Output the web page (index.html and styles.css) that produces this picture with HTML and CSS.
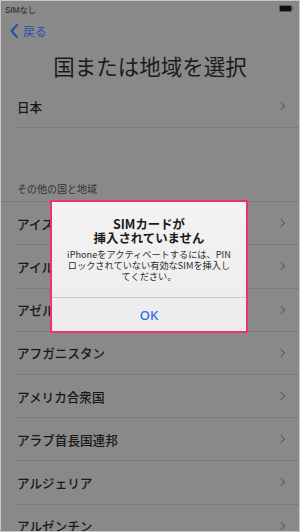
FILE: index.html
```html
<!DOCTYPE html>
<html lang="ja">
<head>
<meta charset="utf-8">
<title>国または地域を選択</title>
<link rel="stylesheet" href="styles.css">
</head>
<body>
<div class="frame">
  <div class="status">
    <span class="carrier">SIMなし</span>
    <span class="battery"><span class="battery-body"></span><span class="battery-nub"></span></span>
  </div>
  <div class="nav">
    <svg class="back-icon" width="8" height="14" viewBox="0 0 8 14"><polyline points="7,1 1.6,7 7,13" fill="none" stroke="#2550a8" stroke-width="2" stroke-linecap="round" stroke-linejoin="round"/></svg>
    <span class="back-text">戻る</span>
  </div>
  <h1 class="title">国または地域を選択</h1>

  <ul class="list">
    <li class="row"><span>日本</span><span class="chev"></span></li>
  </ul>

  <div class="section-header">その他の国と地域</div>
  <ul class="list list-top">
    <li class="row"><span>アイスランド</span><span class="chev"></span></li>
    <li class="row"><span>アイルランド</span><span class="chev"></span></li>
    <li class="row"><span>アゼルバイジャン</span><span class="chev"></span></li>
    <li class="row"><span>アフガニスタン</span><span class="chev"></span></li>
    <li class="row"><span>アメリカ合衆国</span><span class="chev"></span></li>
    <li class="row"><span>アラブ首長国連邦</span><span class="chev"></span></li>
    <li class="row"><span>アルジェリア</span><span class="chev"></span></li>
    <li class="row"><span>アルゼンチン</span><span class="chev"></span></li>
  </ul>

  <div class="alert">
    <div class="alert-body">
      <div class="alert-title">SIMカードが<br>挿入されていません</div>
      <div class="alert-msg">iPhoneをアクティベートするには、PIN<br>ロックされていない有効なSIMを挿入し<br>てください。</div>
    </div>
    <div class="alert-btn">OK</div>
  </div>
</div>
</body>
</html>
```
FILE: styles.css
```css
* { box-sizing: border-box; }
html, body { margin: 0; padding: 0; }
body {
  width: 300px;
  height: 532px;
  overflow: hidden;
  font-family: "Noto Sans CJK JP", "Noto Sans", sans-serif;
  background: #c6c6c6;
}
.frame {
  position: relative;
  width: 300px;
  height: 532px;
  border: 1px solid #c6c6c6;
  background: #898989;
  overflow: hidden;
  color: #1b1b1b;
}
.status {
  height: 15px;
  display: flex;
  align-items: center;
  justify-content: space-between;
  padding: 0 6px 0 4px;
}
.carrier {
  font-family: "Liberation Sans", "Noto Sans CJK JP", sans-serif;
  font-size: 8.2px;
  color: #1e1e1e;
}
.battery {
  display: flex;
  align-items: center;
}
.battery-body {
  width: 13px;
  height: 7px;
  background: #111;
  border: 1px solid #5a5a5a;
  border-radius: 1px;
}
.battery-nub {
  width: 1.5px;
  height: 3px;
  background: #5a5a5a;
}
.nav {
  height: 30px;
  display: flex;
  align-items: center;
  padding-left: 9px;
  gap: 5px;
}
.back-icon { display: block; }
.back-text {
  font-size: 11.8px;
  color: #2550a8;
  line-height: 1;
}
.title {
  margin: 0;
  height: 39px;
  display: flex;
  align-items: center;
  justify-content: center;
  font-size: 21.5px;
  font-weight: 400;
  color: #1b1b1b;
  letter-spacing: 0;
}
.list {
  list-style: none;
  margin: 0;
  padding: 0 0 0 15px;
}
.row {
  height: 43.2px;
  display: flex;
  align-items: center;
  justify-content: space-between;
  padding: 0 13px 0 1px;
  border-bottom: 1px solid #7a7a7a;
  font-size: 12.6px;
  font-weight: 500;
  color: #181818;
}
.list-top { border-top: 1px solid #7a7a7a; }
.chev {
  width: 6px;
  height: 6px;
  border-top: 1.3px solid #5e5e5e;
  border-right: 1.3px solid #5e5e5e;
  transform: rotate(45deg);
  margin-right: 2px;
}
.section-header {
  height: 73px;
  display: flex;
  align-items: flex-end;
  padding: 0 0 5px 16px;
  font-size: 10px;
  line-height: 14px;
  color: #333;
}
.alert {
  position: absolute;
  left: 49px;
  top: 199px;
  width: 198px;
  height: 133px;
  border: 2px solid #f2306d;
  background: linear-gradient(#f3f3f3, #ececec);
  display: flex;
  flex-direction: column;
}
.alert-body {
  flex: 1;
  padding: 16px 8px 0;
  text-align: center;
}
.alert-title {
  font-size: 12.4px;
  font-weight: 700;
  line-height: 13.5px;
  color: #1b1b1b;
}
.alert-msg {
  margin-top: 4px;
  font-size: 9.2px;
  line-height: 11px;
  color: #2a2a2a;
  white-space: nowrap;
}
.alert-btn {
  height: 34px;
  border-top: 1px solid #c9c9c9;
  display: flex;
  align-items: center;
  justify-content: center;
  font-family: "Noto Sans", "Liberation Sans", sans-serif;
  font-size: 13px;
  font-weight: 500;
  color: #2b6de8;
}
```
